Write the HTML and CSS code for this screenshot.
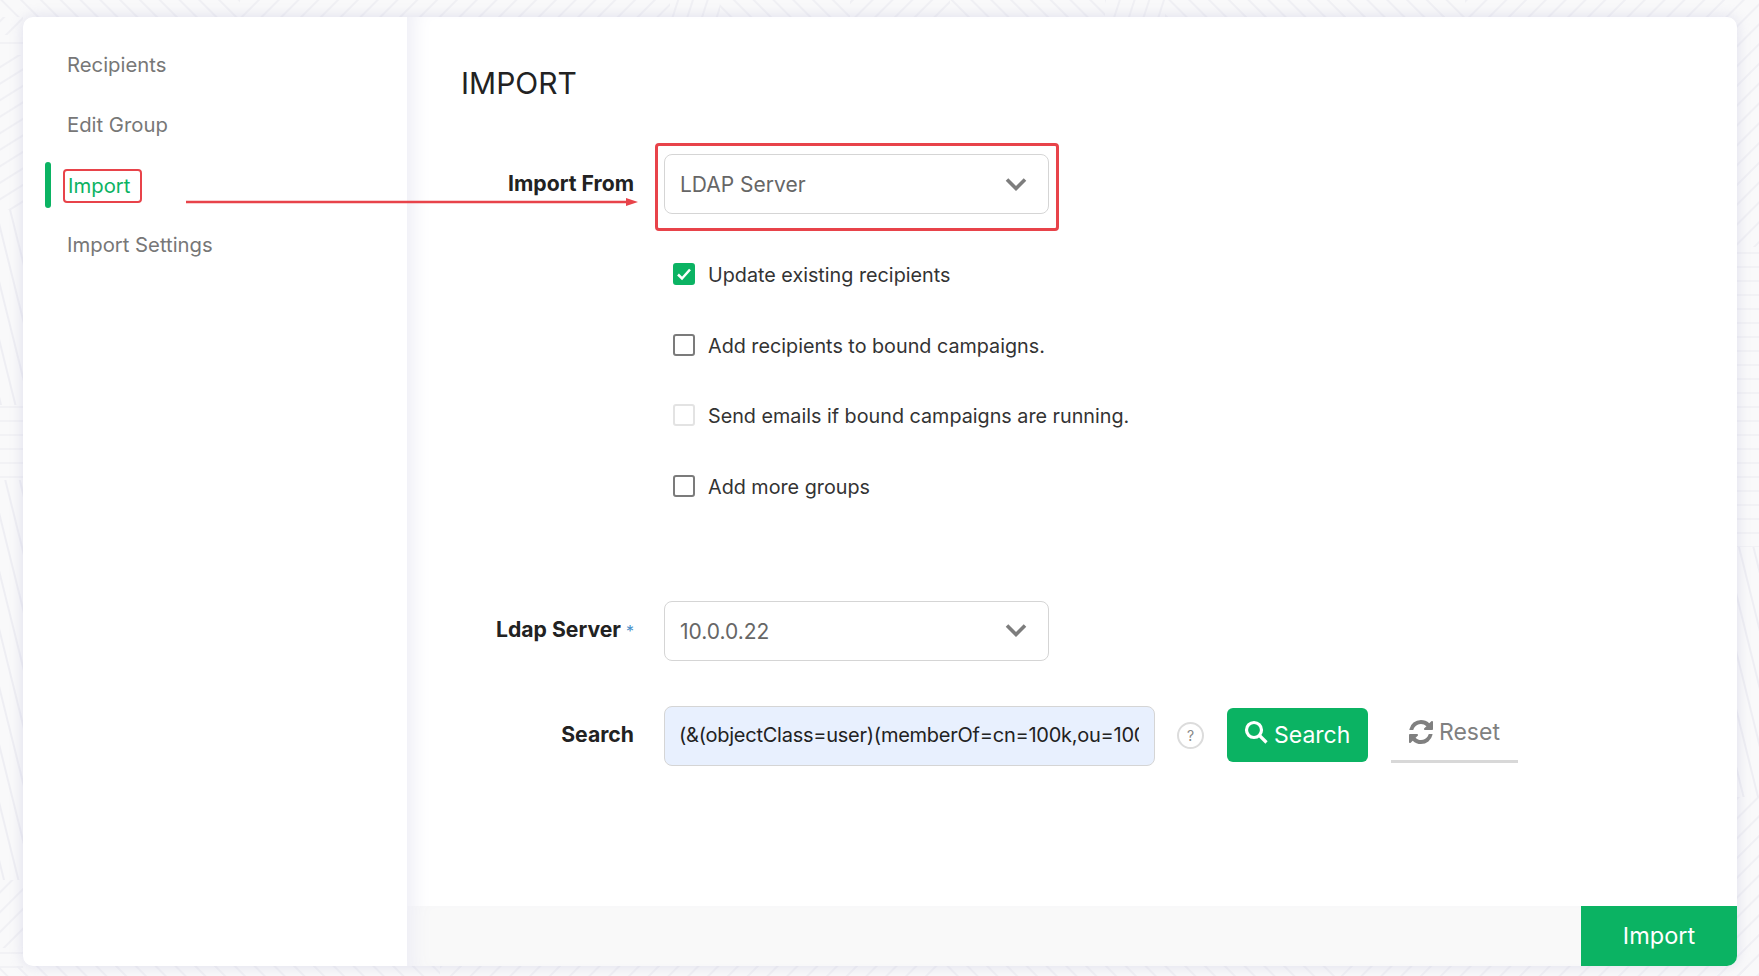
FILE: index.html
```html
<!DOCTYPE html>
<html lang="en">
<head>
  <meta charset="UTF-8" />
  <title>Import</title>
  <link rel="stylesheet" href="styles.css">
</head>
<body>
  <svg class="bg-lines" width="1759" height="976" aria-hidden="true">
    <defs>
      <pattern id="slash" width="14" height="14" patternUnits="userSpaceOnUse" patternTransform="rotate(45)">
        <rect width="2" height="14" fill="#f0f0f4" />
      </pattern>
      <pattern id="back" width="14" height="14" patternUnits="userSpaceOnUse" patternTransform="rotate(-45)">
        <rect width="2" height="14" fill="#f0f0f4" />
      </pattern>
      <pattern id="steep" width="14" height="14" patternUnits="userSpaceOnUse" patternTransform="rotate(18)">
        <rect width="2" height="14" fill="#f0f0f4" />
      </pattern>
      <pattern id="backSteep" width="14" height="14" patternUnits="userSpaceOnUse" patternTransform="rotate(-14)">
        <rect width="2" height="14" fill="#eeeef3" />
      </pattern>
      <pattern id="flat" width="14" height="14" patternUnits="userSpaceOnUse" patternTransform="rotate(90)">
        <rect width="2" height="14" fill="#f2f2f5" />
      </pattern>
      <pattern id="lowSlash" width="14" height="14" patternUnits="userSpaceOnUse" patternTransform="rotate(58)">
        <rect width="2" height="14" fill="#f0f0f4" />
      </pattern>
    </defs>
    <!-- top edge -->
    <rect x="0" y="0" width="240" height="17" fill="url(#back)" />
    <rect x="240" y="0" width="360" height="17" fill="url(#slash)" />
    <rect x="600" y="0" width="70" height="17" fill="url(#slash)" />
    <rect x="670" y="0" width="50" height="17" fill="url(#steep)" />
    <rect x="720" y="0" width="130" height="17" fill="url(#back)" />
    <rect x="850" y="0" width="100" height="17" fill="url(#slash)" />
    <rect x="950" y="0" width="155" height="17" fill="url(#back)" />
    <rect x="1105" y="0" width="60" height="17" fill="url(#steep)" />
    <rect x="1165" y="0" width="300" height="17" fill="url(#back)" />
    <rect x="1465" y="0" width="294" height="17" fill="url(#slash)" />
    <!-- left edge -->
    <rect x="0" y="17" width="23" height="18" fill="url(#slash)" />
    <rect x="0" y="35" width="23" height="20" fill="url(#flat)" />
    <rect x="0" y="55" width="23" height="155" fill="url(#lowSlash)" />
    <rect x="0" y="210" width="23" height="195" fill="url(#backSteep)" />
    <rect x="0" y="405" width="23" height="75" fill="url(#flat)" />
    <rect x="0" y="480" width="23" height="400" fill="url(#backSteep)" />
    <rect x="0" y="880" width="23" height="68" fill="url(#slash)" />
    <rect x="0" y="948" width="23" height="28" fill="url(#flat)" />
    <!-- right edge -->
    <rect x="1737" y="17" width="22" height="230" fill="url(#slash)" />
    <rect x="1737" y="247" width="22" height="300" fill="url(#flat)" />
    <rect x="1737" y="547" width="22" height="250" fill="url(#backSteep)" />
    <rect x="1737" y="797" width="22" height="179" fill="url(#slash)" />
    <!-- bottom edge -->
    <rect x="0" y="966" width="440" height="10" fill="url(#back)" />
    <rect x="440" y="966" width="500" height="10" fill="url(#slash)" />
    <rect x="940" y="966" width="400" height="10" fill="url(#back)" />
    <rect x="1340" y="966" width="419" height="10" fill="url(#slash)" />
  </svg>

  <div class="card">
    <aside class="sidebar">
      <a class="nav-item">Recipients</a>
      <a class="nav-item">Edit Group</a>
      <a class="nav-item active"><span class="mark-box">Import</span></a>
      <a class="nav-item">Import Settings</a>
    </aside>

    <main class="main">
      <div class="content">
        <h1>IMPORT</h1>

        <div class="form-row first-row">
          <label class="form-label">Import From</label>
          <div class="select mark-select">
            <span>LDAP Server</span>
            <svg class="chevron" width="22" height="14" viewBox="0 0 22 14"><path d="M2 2.5l9 9 9-9" /></svg>
          </div>
        </div>

        <div class="checks">
          <div class="check-row">
            <span class="check checked">
              <svg width="16" height="14" viewBox="0 0 16 14"><path d="M2 7.5l4 4 8-9" /></svg>
            </span>
            <span>Update existing recipients</span>
          </div>
          <div class="check-row">
            <span class="check"></span>
            <span>Add recipients to bound campaigns.</span>
          </div>
          <div class="check-row">
            <span class="check disabled"></span>
            <span>Send emails if bound campaigns are running.</span>
          </div>
          <div class="check-row">
            <span class="check"></span>
            <span>Add more groups</span>
          </div>
        </div>

        <div class="form-row server-row">
          <label class="form-label">Ldap Server <em>*</em></label>
          <div class="select">
            <span>10.0.0.22</span>
            <svg class="chevron" width="22" height="14" viewBox="0 0 22 14"><path d="M2 2.5l9 9 9-9" /></svg>
          </div>
        </div>

        <div class="form-row search-row">
          <label class="form-label">Search</label>
          <div class="search-controls">
            <input class="search-input" type="text" value="(&amp;(objectClass=user)(memberOf=cn=100k,ou=100k,dc=example,dc=local))" />
            <span class="help">?</span>
            <button class="btn-search" type="button">
              <svg width="25" height="25" viewBox="0 0 25 25"><circle cx="10" cy="10" r="7.5" /><path d="M15.5 15.5l7 7" /></svg>
              Search
            </button>
            <button class="btn-reset" type="button">
              <svg width="24" height="24" viewBox="0 0 1536 1536"><path d="M1511 928q0 5-1 7-64 268-268 434.5t-478 166.5q-146 0-282.5-55t-243.5-157l-129 129q-19 19-45 19t-45-19-19-45v-448q0-26 19-45t45-19h448q26 0 45 19t19 45-19 45l-137 137q71 66 161 102t187 36q134 0 250-65t186-179q11-17 53-117 8-23 30-23h192q13 0 22.5 9.5t9.5 22.5zm25-800v448q0 26-19 45t-45 19h-448q-26 0-45-19t-19-45 19-45l138-138q-148-137-349-137-134 0-250 65t-186 179q-11 17-53 117-8 23-30 23h-199q-13 0-22.5-9.5t-9.5-22.5v-7q65-268 270-434.5t480-166.5q146 0 284 55.5t245 156.5l130-129q19-19 45-19t45 19 19 45z" /></svg>
              Reset
            </button>
          </div>
        </div>
      </div>

      <div class="footer">
        <button class="btn-import" type="button">Import</button>
      </div>
    </main>
  </div>

  <!-- annotation arrow drawn over the screenshot -->
  <svg class="arrow" width="460" height="12" viewBox="0 0 460 12">
    <path d="M0 6h445" stroke="#e8434a" stroke-width="2.6" fill="none" />
    <path d="M440 2l12 4-12 4z" fill="#e8434a" />
  </svg>
</body>
</html>
```

FILE: styles.css
```css
* {
  box-sizing: border-box;
}

body {
  margin: 0;
  height: 976px;
  padding: 17px 22px 10px 23px;
  overflow: hidden;
  position: relative;
  background: #f9f9fa;
  font-family: "Inter", "Noto Sans", sans-serif;
  font-size: 20px;
  color: #2b2b2b;
}

.bg-lines {
  position: absolute;
  top: 0;
  left: 0;
}

.card {
  position: relative;
  display: flex;
  height: 949px;
  background: #fff;
  border-radius: 10px;
  box-shadow: 0 0 14px rgba(190,190,220,0.45);
  overflow: hidden;
}

.sidebar {
  width: 384px;
  flex-shrink: 0;
  padding-top: 17px;
  padding-left: 44px;
}

.nav-item {
  display: flex;
  align-items: center;
  height: 60px;
  position: relative;
  color: #777;
  font-size: 20.3px;
}

.nav-item.active {
  color: #0bb363;
}

.nav-item.active::before {
  content: "";
  position: absolute;
  left: -22px;
  top: 8px;
  width: 6px;
  height: 46px;
  background: #0bb363;
  border-radius: 3px;
}

.mark-box {
  margin-left: -4px;
  margin-top: 3px;
  padding: 0 8px 0 3px;
  width: 79px;
  height: 34px;
  line-height: 30px;
  border: 2.5px solid #e8434a;
  border-radius: 4px;
}

.main {
  flex: 1;
  display: flex;
  flex-direction: column;
  box-shadow: inset 20px 0 20px -14px #ededf5;
}

.content {
  flex: 1;
  padding-left: 54px;
}

h1 {
  margin: 46px 0 0;
  height: 40px;
  line-height: 40px;
  font-size: 30px;
  font-weight: 400;
  color: #222;
}

.form-row {
  display: grid;
  grid-template-columns: 173px 1fr;
  column-gap: 30px;
  align-items: center;
}

.first-row {
  margin-top: 51px;
}

.server-row {
  margin-top: 104px;
}

.search-row {
  margin-top: 45px;
}

.form-label {
  text-align: right;
  font-weight: 700;
  font-size: 21.2px;
  color: #222;
  margin-top: -3px;
}

.form-label em {
  font-style: normal;
  font-weight: 400;
  color: #4a90c8;
  font-size: 16px;
}

.select {
  position: relative;
  display: flex;
  align-items: center;
  justify-content: space-between;
  width: 385px;
  height: 60px;
  padding: 1px 21px 0 15px;
  background: #fff;
  border: 1px solid #d5d5d5;
  border-radius: 8px;
  font-size: 21px;
  color: #666;
}

.mark-select::after {
  content: "";
  position: absolute;
  left: -10px;
  right: -11px;
  top: -12px;
  bottom: -18px;
  border: 3px solid #e8434a;
  border-radius: 4px;
}

.chevron {
  margin-top: -2px;
}

.chevron path {
  fill: none;
  stroke: #7d7d7d;
  stroke-width: 3.6;
}

.checks {
  margin-top: 49px;
  padding-left: 212px;
}

.check-row {
  display: flex;
  align-items: center;
  gap: 13px;
  height: 22px;
  margin-bottom: 48.5px;
  font-size: 19.75px;
  line-height: 24px;
  color: #333;
}

.check {
  display: flex;
  align-items: center;
  justify-content: center;
  width: 22px;
  height: 22px;
  flex-shrink: 0;
  border: 2px solid #7b7b7b;
  border-radius: 3px;
}

.check.checked {
  background: #0bb363;
  border-color: #0bb363;
}

.check.checked path {
  fill: none;
  stroke: #fff;
  stroke-width: 2.5;
}

.check.disabled {
  border-color: #e3e3e3;
}

.check + span {
  padding-top: 2px;
}

.search-controls {
  display: flex;
  align-items: center;
}

.search-input {
  width: 491px;
  height: 60px;
  padding: 0 15px 2px 14px;
  background: #e8f0fe;
  border: 1px solid #d5d5d5;
  border-radius: 8px;
  font-family: inherit;
  font-size: 20px;
  letter-spacing: -0.25px;
  color: #222;
}

.help {
  width: 27px;
  height: 27px;
  margin-left: 22px;
  border: 2px solid #dcdcdc;
  border-radius: 50%;
  font-size: 14px;
  line-height: 23px;
  text-align: center;
  color: #888;
}

.btn-search {
  display: flex;
  align-items: center;
  gap: 5px;
  width: 141px;
  height: 54px;
  margin-left: 23px;
  margin-top: -2px;
  padding: 0 0 0 17px;
  background: #0bb363;
  border: none;
  border-radius: 6px;
  font-family: inherit;
  font-size: 23px;
  color: #fff;
}

.btn-search svg {
  margin-top: -4px;
  fill: none;
  stroke: #fff;
  stroke-width: 3.2;
}

.btn-reset {
  display: flex;
  align-items: center;
  gap: 6px;
  width: 127px;
  height: 54px;
  margin-left: 23px;
  padding: 0 0 4px 18px;
  background: none;
  border: none;
  border-bottom: 3px solid #d8d8d8;
  font-family: inherit;
  font-size: 23px;
  color: #808080;
}

.btn-reset svg {
  fill: #808080;
}

.footer {
  display: flex;
  justify-content: flex-end;
  height: 60px;
  background: #f9f9f9;
  box-shadow: inset 20px 0 20px -14px #ededf5;
}

.btn-import {
  width: 156px;
  padding-bottom: 2px;
  background: #0bb363;
  border: none;
  font-family: inherit;
  font-size: 23.5px;
  color: #fff;
}

.arrow {
  position: absolute;
  left: 186px;
  top: 196px;
}
```
